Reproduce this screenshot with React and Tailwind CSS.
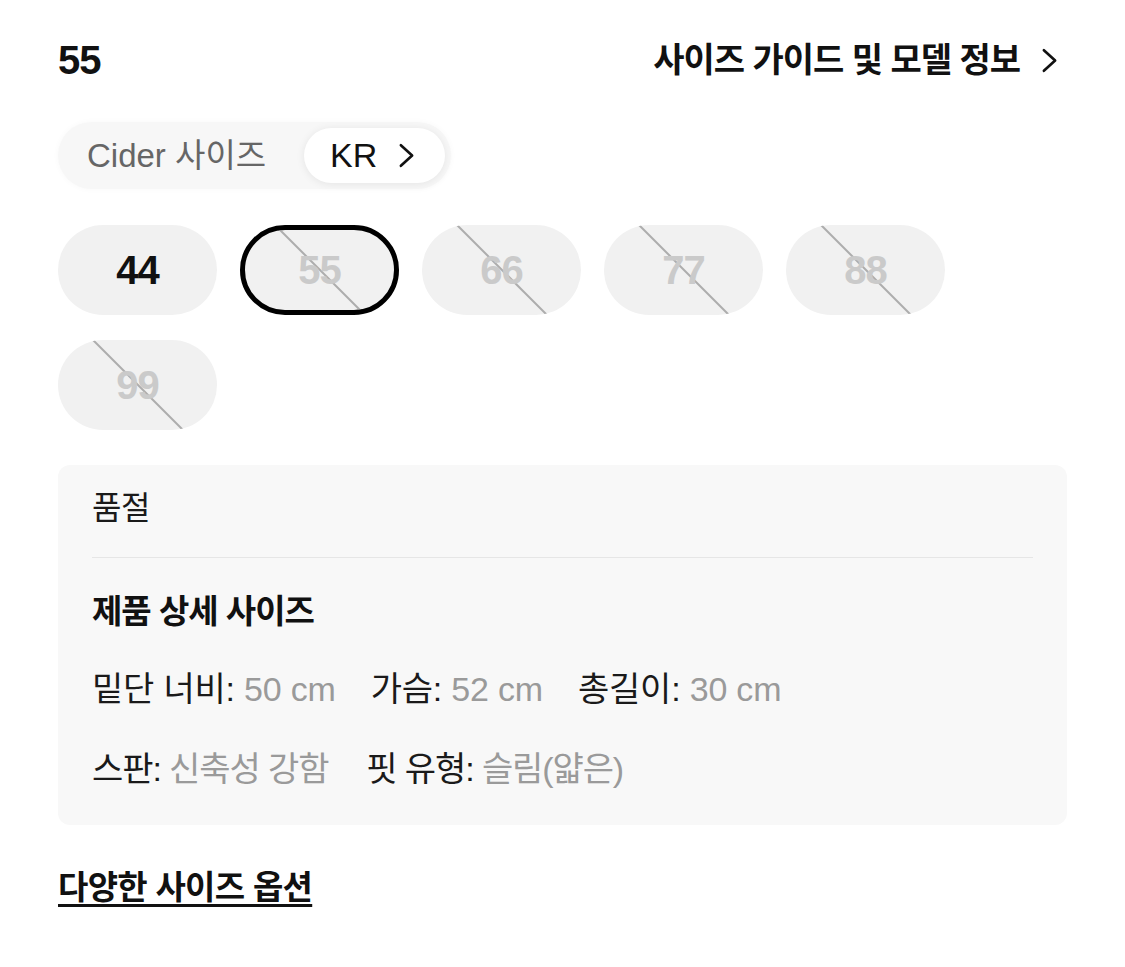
const FONT = "font-['Liberation_Sans','Noto_Sans_CJK_KR',sans-serif]";

const sizes = [
  { label: '44', soldOut: false },
  { label: '55', soldOut: true, selected: true },
  { label: '66', soldOut: true },
  { label: '77', soldOut: true },
  { label: '88', soldOut: true },
  { label: '99', soldOut: true },
];

const Chevron = ({ className }) => (
  <svg viewBox="0 0 16 26" fill="none" className={className}>
    <polyline points="2,2 14,13 2,24" stroke="currentColor" strokeWidth="2.8" strokeLinecap="round" strokeLinejoin="round" />
  </svg>
);

const SizeButton = ({ size }) => {
  return (
    <button
      className={`relative w-[159px] h-[90px] rounded-full bg-[#f1f1f1] overflow-hidden flex items-center justify-center ${
        size.selected ? 'border-[5px] border-black' : ''
      }`}
    >
      {size.soldOut && (
        <span className="absolute left-1/2 top-1/2 w-[2px] h-[140px] -translate-x-1/2 -translate-y-1/2 -rotate-45 bg-[#adadad]" />
      )}
      <span
        className={`relative text-[40px] font-bold tracking-[-1px] ${
          size.soldOut ? 'text-[#cacaca]' : 'text-[#111]'
        }`}
      >
        {size.label}
      </span>
    </button>
  );
};

const Spec = ({ label, value }) => (
  <span className="whitespace-nowrap">
    <span className="text-[#1a1a1a]">{label}: </span>
    <span className="text-[#9a9a9a]">{value}</span>
  </span>
);

export default function App() {
  return (
    <div className={`w-[1125px] min-h-[967px] bg-white px-[58px] pt-[30px] ${FONT}`}>
      {/* Header */}
      <div className="h-[60px] flex items-center justify-between">
        <span className="text-[40px] font-bold text-[#111] tracking-[-1px]">55</span>
        <div className="flex items-center gap-[22px] pr-[10px] text-[#111]">
          <span className="text-[34px] font-semibold tracking-[-1px]">사이즈 가이드 및 모델 정보</span>
          <Chevron className="w-[15px] h-[25px]" />
        </div>
      </div>

      {/* Size system */}
      <div className="mt-[32px] inline-flex items-center h-[67px] rounded-full bg-[#f7f7f7] pl-[29px] pr-[6px] shadow-[0_0_6px_rgba(0,0,0,0.03)]">
        <span className="text-[33px] text-[#666]">Cider 사이즈</span>
        <div className="ml-[38px] h-[55px] rounded-full bg-white pl-[26px] pr-[31px] flex items-center gap-[22px] shadow-[0_1px_8px_rgba(0,0,0,0.08)]">
          <span className="text-[34px] text-[#111]">KR</span>
          <Chevron className="w-[15px] h-[25px] text-[#111]" />
        </div>
      </div>

      {/* Size options */}
      <div className="mt-[36px] flex flex-wrap gap-x-[23px] gap-y-[25px]">
        {sizes.map((size) => (
          <SizeButton key={size.label} size={size} />
        ))}
      </div>

      {/* Detail */}
      <div className="mt-[35px] rounded-[12px] bg-[#f8f8f8] px-[34px] pt-[20px] pb-[33px]">
        <div className="h-[46px] flex items-center text-[32px] text-[#1a1a1a] tracking-[-0.5px]">품절</div>
        <div className="mt-[26px] h-px bg-[#e6e6e6]" />
        <div className="mt-[31px] h-[46px] flex items-center text-[33px] font-bold text-[#111] tracking-[-1px]">
          제품 상세 사이즈
        </div>
        <div className="mt-[31px] h-[46px] flex items-center gap-[35px] text-[34px] tracking-[-0.2px]">
          <Spec label="밑단 너비" value="50 cm" />
          <Spec label="가슴" value="52 cm" />
          <Spec label="총길이" value="30 cm" />
        </div>
        <div className="mt-[34px] h-[46px] flex items-center gap-[38px] text-[34px] tracking-[-1.1px]">
          <Spec label="스판" value="신축성 강함" />
          <Spec label="핏 유형" value="슬림(얇은)" />
        </div>
      </div>

      {/* Link */}
      <div className="mt-[38px]">
        <a className="text-[33px] font-bold text-[#111] underline underline-offset-[5px] decoration-[2.5px] tracking-[-0.7px]">
          다양한 사이즈 옵션
        </a>
      </div>
    </div>
  );
}
